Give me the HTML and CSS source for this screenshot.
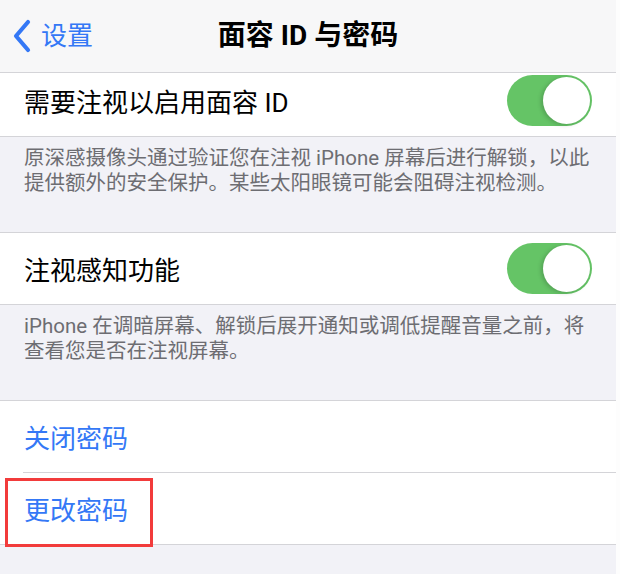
FILE: index.html
```html
<!DOCTYPE html>
<html lang="zh-CN">
<head>
<meta charset="UTF-8" />
<meta name="viewport" content="width=device-width, initial-scale=1" />
<title>面容 ID 与密码</title>
<link rel="stylesheet" href="styles.css">
</head>
<body>

<div class="pantalla">

  <!-- Barra de navegación -->
  <div class="nav">
    <div class="volver">
      <svg class="chevron" width="20" height="34" viewBox="0 0 20 34">
        <path d="M16 3 L4 17 L16 31" fill="none" stroke="#3478f6" stroke-width="4.2" stroke-linecap="round" stroke-linejoin="round"/>
      </svg>
      <span>设置</span>
    </div>
    <div class="titulo">面容 ID 与密码</div>
  </div>

  <!-- Grupo 1 -->
  <div class="grupo">
    <div class="fila primera">
      <span class="etiqueta">需要注视以启用面容 ID</span>
      <div class="interruptor activo"><div class="perilla"></div></div>
    </div>
  </div>
  <div class="nota">原深感摄像头通过验证您在注视 iPhone 屏幕后进行解锁，以此提供额外的安全保护。某些太阳眼镜可能会阻碍注视检测。</div>

  <!-- Grupo 2 -->
  <div class="grupo">
    <div class="fila">
      <span class="etiqueta">注视感知功能</span>
      <div class="interruptor activo"><div class="perilla"></div></div>
    </div>
  </div>
  <div class="nota">iPhone 在调暗屏幕、解锁后展开通知或调低提醒音量之前，将查看您是否在注视屏幕。</div>

  <!-- Grupo 3 -->
  <div class="grupo">
    <div class="fila"><span class="enlace">关闭密码</span></div>
    <div class="fila marcada"><span class="enlace">更改密码</span></div>
  </div>

</div>

</body>
</html>
```

FILE: styles.css
```css
body {
  margin: 0;
  background: #fdfdfd;
  font-family: Roboto, "Noto Sans CJK SC", sans-serif;
}
.pantalla {
  width: 616px;
  height: 574px;
  background: #f2f2f7;
  overflow: hidden;
}
.nav {
  height: 72px;
  background: #f7f7f8;
  border-bottom: 1px solid #d4d4d8;
  display: flex;
  align-items: center;
  position: relative;
}
.volver {
  display: flex;
  align-items: center;
  gap: 9px;
  padding-left: 12px;
  color: #3478f6;
  font-size: 26px;
}
.volver span {
  line-height: 1;
}
.titulo {
  position: absolute;
  left: 0;
  right: 0;
  top: 0;
  height: 72px;
  line-height: 72px;
  text-align: center;
  font-size: 28px;
  font-weight: 700;
  color: #000;
  pointer-events: none;
}
.grupo {
  background: #fff;
  border-top: 1px solid #d4d4d8;
  border-bottom: 1px solid #d4d4d8;
}
.nav + .grupo {
  border-top: none;
}
.fila {
  height: 71px;
  display: flex;
  align-items: center;
  justify-content: space-between;
  padding: 0 24px 0 24px;
  position: relative;
}
.fila.primera {
  height: 55px;
  padding-bottom: 8px;
}
.fila + .fila {
  border-top: 1px solid #d4d4d8;
  margin-left: 23px;
  padding-left: 1px;
}
.etiqueta {
  font-size: 26px;
  color: #000;
}
.enlace {
  font-size: 26px;
  color: #3478f6;
}
.nota {
  padding: 9px 16px 36px 24px;
  font-size: 20.5px;
  line-height: 25px;
  color: #6d6d72;
}
/* Interruptor estilo iOS */
.interruptor {
  width: 85px;
  height: 51px;
  border-radius: 26px;
  background: #e5e5ea;
  display: flex;
  align-items: center;
  padding: 2px;
  box-sizing: border-box;
}
.interruptor.activo {
  background: #65c466;
  justify-content: flex-end;
}
.perilla {
  width: 47px;
  height: 47px;
  border-radius: 50%;
  background: #fff;
  box-shadow: -2px 1px 4px rgba(0, 0, 0, 0.18);
}
/* Recuadro rojo de anotación */
.marcada::after {
  content: "";
  position: absolute;
  left: -18px;
  top: 5px;
  width: 142px;
  height: 63px;
  border: 3px solid #f23b3b;
}
```
